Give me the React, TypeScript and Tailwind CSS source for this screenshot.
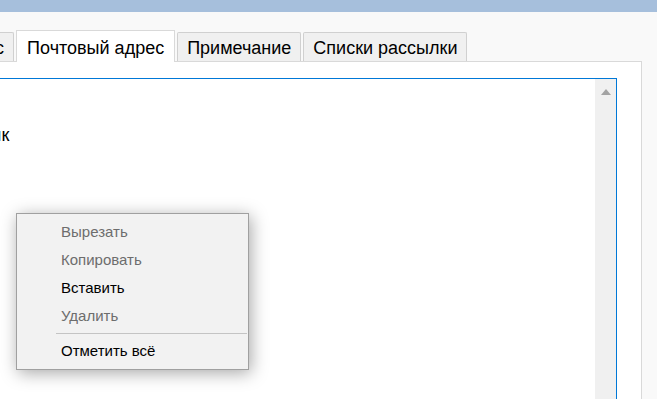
import React from 'react';

const tabs = [
  { label: 'Бизнес', active: false },
  { label: 'Почтовый адрес', active: true },
  { label: 'Примечание', active: false },
  { label: 'Списки рассылки', active: false },
];

const menuItems: ({ label: string; disabled: boolean } | 'sep')[] = [
  { label: 'Вырезать', disabled: true },
  { label: 'Копировать', disabled: true },
  { label: 'Вставить', disabled: false },
  { label: 'Удалить', disabled: true },
  'sep',
  { label: 'Отметить всё', disabled: false },
];

function ContextMenu() {
  return (
    <div className="absolute left-[16px] top-[213px] w-[233px] border border-[#a0a0a0] bg-[#f2f2f2] pt-[4px] pb-[4px] shadow-[2px_3px_16px_rgba(0,0,0,0.35)] text-[15px]">
      {menuItems.map((item, i) =>
        item === 'sep' ? (
          <div key={i} className="ml-[39px] mr-[1px] my-[3px] h-px bg-[#c4c4c4]" />
        ) : (
          <div
            key={i}
            className={`flex h-[28px] items-center pl-[44px] ${item.disabled ? 'text-[#6d6d6d]' : 'text-black'}`}
          >
            {item.label}
          </div>
        )
      )}
    </div>
  );
}

export default function App() {
  return (
    <div
      className="relative h-[399px] w-[657px] overflow-hidden bg-[#f9f9f9]"
      style={{ fontFamily: '"Liberation Sans", Arial, sans-serif' }}
    >
      <div className="h-[12px] bg-[#a6bfdc]" />

      <div className="pt-[18px]">
        {/* вкладки */}
        <div className="ml-[-65px] flex items-end gap-[2px] text-[18px] text-black">
          {tabs.map((t) => (
            <div
              key={t.label}
              className={
                t.active
                  ? 'relative z-10 -mb-px h-[32px] border border-b-0 border-[#d9d9d9] bg-white px-[10px] pt-[4px]'
                  : 'h-[29px] rounded-t-[2px] border border-b-0 border-[#d0d0d0] bg-[#f0f0f0] px-[9px] pt-[2px]'
              }
            >
              {t.label}
            </div>
          ))}
        </div>

        {/* панель */}
        <div className="ml-[-20px] w-[662px] h-[340px] border border-[#d9d9d9] bg-white pt-[16px] pr-[24px] pl-[10px]">
          <div className="flex h-[330px] border border-[#0078d7] bg-white">
            <div className="flex-1 pt-[46px] text-[18px] leading-[20px] text-black">
              <div className="ml-[-52px]">Оптовик</div>
            </div>
            <div className="flex w-[21px] justify-center bg-[#f0f0f0] pt-[10px]">
              <svg width="10" height="6" viewBox="0 0 10 6">
                <path d="M5 0 L10 6 L0 6 Z" fill="#a3a3a3" />
              </svg>
            </div>
          </div>
        </div>
      </div>

      <ContextMenu />
    </div>
  );
}
